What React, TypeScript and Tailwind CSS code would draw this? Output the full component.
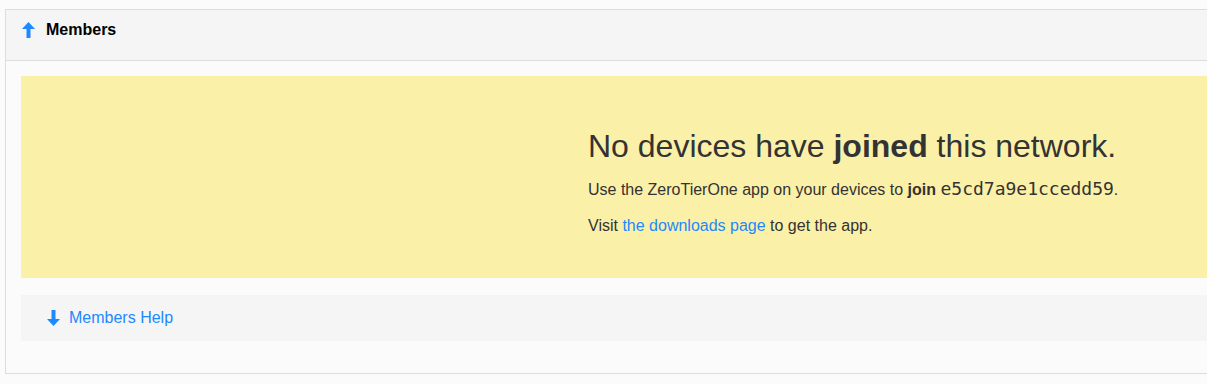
function Arrow({ down = false }: { down?: boolean }) {
  return (
    <svg
      width="13"
      height="16"
      viewBox="0 0 13 16"
      className={down ? 'rotate-180 text-[#1e88ff]' : 'text-[#1e88ff]'}
    >
      <polygon points="6.5,0 13,7 8.5,7 8.5,16 4.5,16 4.5,7 0,7" fill="currentColor" />
    </svg>
  );
}

export default function App() {
  return (
    <div
      className="h-[384px] w-[1207px] overflow-hidden bg-[#fbfbfb] pl-[5px] pt-[9px]"
      style={{ fontFamily: '"Liberation Sans", Arial, sans-serif' }}
    >
      <div className="w-[1240px] border border-[#dddddd] bg-[#fbfbfb]">
        <div className="flex h-[51px] items-center gap-[11px] border-b border-[#dddddd] bg-[#f5f5f5] pl-[16px] pb-[10px]">
          <Arrow />
          <span className="text-[16px] font-bold text-black">Members</span>
        </div>

        <div className="pl-[15px] pt-[15px] pb-[32px]">
          <div className="h-[202px] bg-[#fbf0a8] pl-[567px] pt-[52px] text-[#333333]">
            <h1 className="text-[32px] leading-[36px]">
              No devices have <strong>joined</strong> this network.
            </h1>
            <p className="mt-[14px] text-[16px] leading-[22px]">
              Use the ZeroTierOne app on your devices to <strong>join</strong>{' '}
              <code
                className="text-[18px] font-normal leading-[22px]"
                style={{ fontFamily: '"DejaVu Sans Mono", monospace' }}
              >
                e5cd7a9e1ccedd59
              </code>
              .
            </p>
            <p className="mt-[14px] text-[16px] leading-[22px]">
              Visit <a className="text-[#1e88ff]">the downloads page</a> to get the app.
            </p>
          </div>

          <div className="mt-[17px] flex h-[46px] items-center gap-[9px] bg-[#f5f5f5] pl-[26px]">
            <Arrow down />
            <span className="text-[16px] text-[#1e88ff]">Members Help</span>
          </div>
        </div>
      </div>
    </div>
  );
}
